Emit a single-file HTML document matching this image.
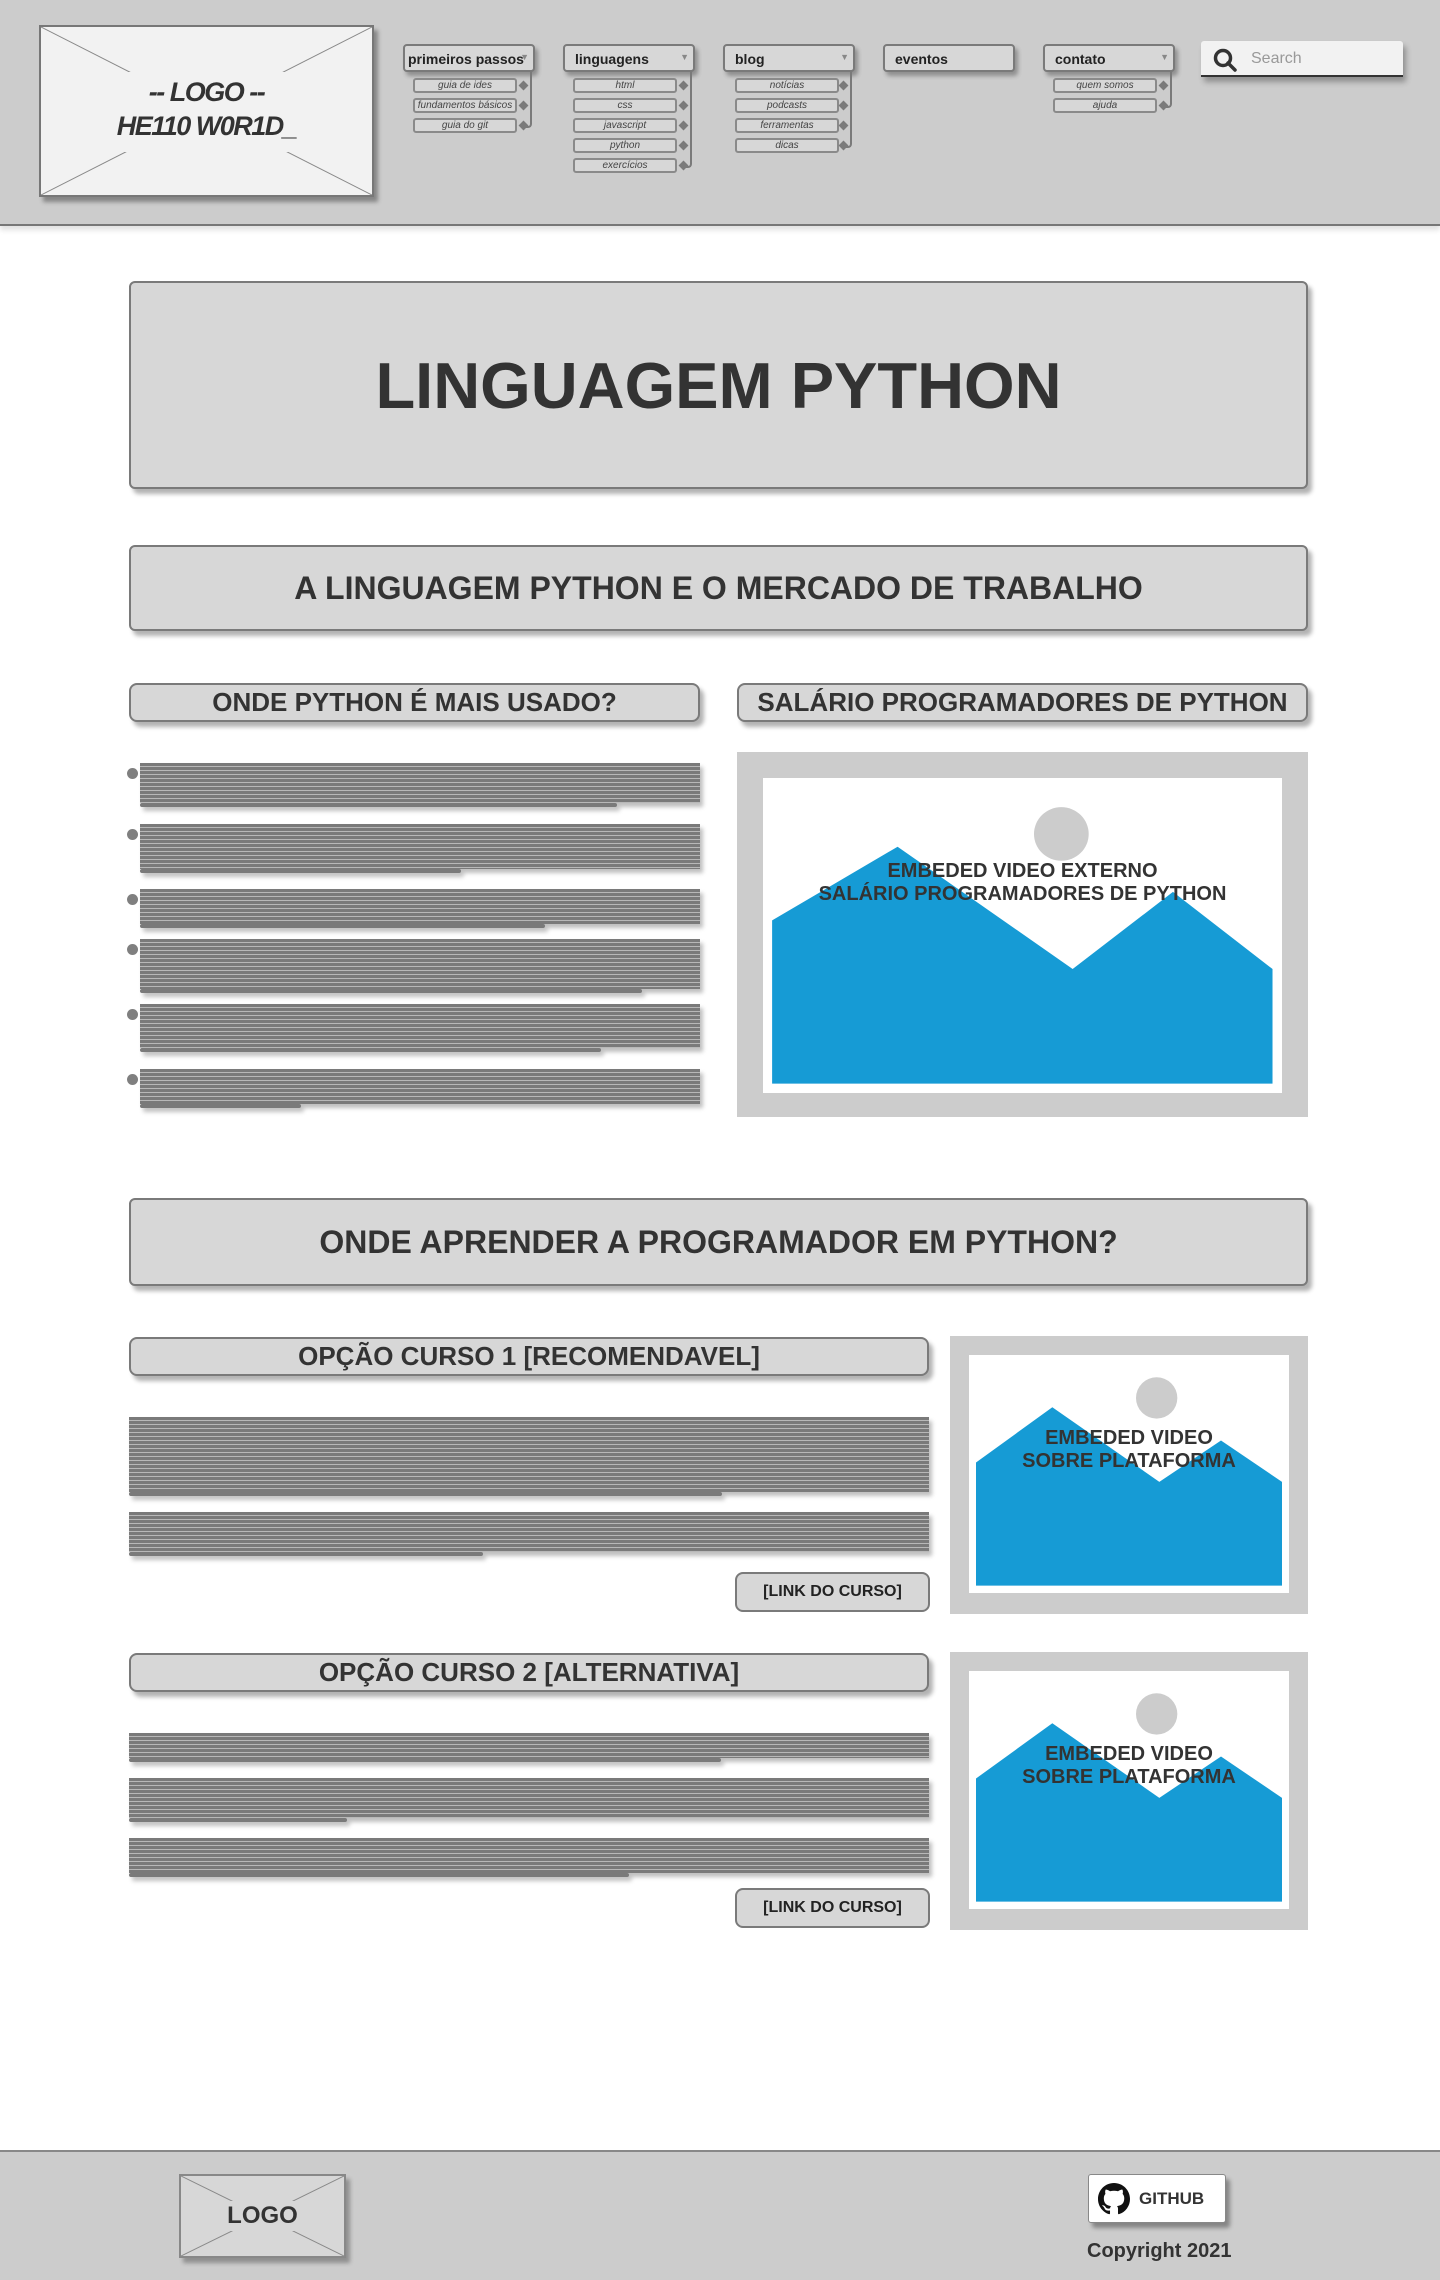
<!DOCTYPE html>
<html><head><meta charset="utf-8">
<style>
*{margin:0;padding:0;box-sizing:border-box}
body{width:1440px;height:2280px;position:relative;background:#fff;font-family:"Liberation Sans",Arial,sans-serif;color:#333;overflow:hidden}
.a{position:absolute}
.box{position:absolute;background:#d7d7d7;border:2px solid #7a7a7a;border-radius:6px;box-shadow:4px 5px 4px rgba(0,0,0,.3);display:flex;align-items:center;justify-content:center;font-weight:bold;color:#333;white-space:nowrap}
.nav{position:absolute;top:44px;height:28px;width:132px;background:#d7d7d7;border:2px solid #7a7a7a;border-radius:4px;box-shadow:3px 4px 4px rgba(0,0,0,.3);font-size:14px;font-weight:bold;padding:5px 0 0 3px;color:#222;white-space:nowrap}
.nav .ar{position:absolute;right:4px;top:6px;font-size:9px;color:#888}
.sub{position:absolute;height:15px;width:104px;background:#d7d7d7;border:2px solid #8a8a8a;border-radius:3px;font-size:10px;font-style:italic;text-align:center;line-height:12px;color:#444;white-space:nowrap;overflow:hidden}
.conn{position:absolute;border-right:2px solid #7a7a7a;border-bottom:2px solid #7a7a7a;border-radius:0 0 4px 0;width:6px}
.dm{position:absolute;width:7px;height:7px;background:#7a7a7a;transform:rotate(45deg)}
.lines{position:absolute;background:repeating-linear-gradient(to bottom,#7a7a7a 0,#7a7a7a 3px,#b8b8b8 3px,#b8b8b8 4px);box-shadow:3px 4px 4px rgba(0,0,0,.25)}
.last{position:absolute;height:4px;background:#7a7a7a;border-radius:2px;box-shadow:3px 4px 4px rgba(0,0,0,.25)}
.dot{position:absolute;width:11px;height:11px;border-radius:50%;background:#7f7f7f}
.vid{position:absolute;background:#ccc}
.vid .w{position:absolute;background:#fff}
.vid svg{position:absolute;left:0;top:0;width:100%;height:100%}
.vt{position:absolute;left:0;right:0;text-align:center;font-weight:bold;color:#333;white-space:nowrap}
.btn{position:absolute;background:#d7d7d7;border:2px solid #7a7a7a;border-radius:8px;font-size:16px;font-weight:bold;display:flex;align-items:center;justify-content:center;color:#222}
</style></head><body>

<!-- header -->
<div class="a" style="left:0;top:0;width:1440px;height:226px;background:#ccc;border-bottom:2px solid #777;box-shadow:0 4px 5px rgba(0,0,0,.12)"></div>
<div class="a" style="left:39px;top:25px;width:335px;height:172px;background:#f2f2f2;border:2px solid #777;box-shadow:4px 5px 4px rgba(0,0,0,.35)">
<svg width="331" height="168" style="position:absolute;left:0;top:0"><line x1="0" y1="0" x2="331" y2="168" stroke="#888" stroke-width="1"/><line x1="331" y1="0" x2="0" y2="168" stroke="#888" stroke-width="1"/></svg>
<div style="position:absolute;left:80px;top:45px;width:171px;height:80px;background:#f2f2f2"></div>
<div style="position:absolute;left:0;right:0;top:48px;text-align:center;font-style:italic;font-weight:bold;font-size:27px;line-height:34px;color:#333;letter-spacing:-1.5px">-- LOGO --<br>HE110 W0R1D_</div>
</div>

<div class="nav" style="left:403px">primeiros passos<span class="ar">▼</span></div>
<div class="nav" style="left:563px;padding-left:10px">linguagens<span class="ar">▼</span></div>
<div class="nav" style="left:723px;padding-left:10px">blog<span class="ar">▼</span></div>
<div class="nav" style="left:883px;padding-left:10px">eventos</div>
<div class="nav" style="left:1043px;padding-left:10px">contato<span class="ar">▼</span></div>

<div class="sub" style="left:413px;top:78px">guia de ides</div>
<div class="sub" style="left:413px;top:98px">fundamentos básicos</div>
<div class="sub" style="left:413px;top:118px">guia do git</div>
<div class="conn" style="left:526px;top:72px;height:56px"></div>
<div class="dm" style="left:520px;top:82px"></div><div class="dm" style="left:520px;top:102px"></div><div class="dm" style="left:520px;top:122px"></div>

<div class="sub" style="left:573px;top:78px">html</div>
<div class="sub" style="left:573px;top:98px">css</div>
<div class="sub" style="left:573px;top:118px">javascript</div>
<div class="sub" style="left:573px;top:138px">python</div>
<div class="sub" style="left:573px;top:158px">exercícios</div>
<div class="conn" style="left:686px;top:72px;height:96px"></div>
<div class="dm" style="left:680px;top:82px"></div><div class="dm" style="left:680px;top:102px"></div><div class="dm" style="left:680px;top:122px"></div><div class="dm" style="left:680px;top:142px"></div><div class="dm" style="left:680px;top:162px"></div>

<div class="sub" style="left:735px;top:78px">notícias</div>
<div class="sub" style="left:735px;top:98px">podcasts</div>
<div class="sub" style="left:735px;top:118px">ferramentas</div>
<div class="sub" style="left:735px;top:138px">dicas</div>
<div class="conn" style="left:846px;top:72px;height:76px"></div>
<div class="dm" style="left:840px;top:82px"></div><div class="dm" style="left:840px;top:102px"></div><div class="dm" style="left:840px;top:122px"></div><div class="dm" style="left:840px;top:142px"></div>

<div class="sub" style="left:1053px;top:78px">quem somos</div>
<div class="sub" style="left:1053px;top:98px">ajuda</div>
<div class="conn" style="left:1166px;top:72px;height:36px"></div>
<div class="dm" style="left:1160px;top:82px"></div><div class="dm" style="left:1160px;top:102px"></div>

<div class="a" style="left:1201px;top:41px;width:202px;height:36px;background:#f2f2f2;border-bottom:2px solid #333;border-radius:3px 3px 0 0;box-shadow:3px 5px 6px rgba(0,0,0,.3)">
<svg width="30" height="30" style="position:absolute;left:10px;top:5px"><circle cx="12" cy="12" r="7.5" fill="none" stroke="#333" stroke-width="3.5"/><line x1="17" y1="17" x2="24" y2="24" stroke="#333" stroke-width="3.5" stroke-linecap="round"/></svg>
<div style="position:absolute;left:50px;top:9px;font-size:16px;color:#999">Search</div>
</div>

<!-- main -->
<div class="box" style="left:129px;top:281px;width:1179px;height:208px;font-size:65px">LINGUAGEM PYTHON</div>
<div class="box" style="left:129px;top:545px;width:1179px;height:86px;font-size:32px">A LINGUAGEM PYTHON E O MERCADO DE TRABALHO</div>

<div class="box" style="left:129px;top:683px;width:571px;height:39px;font-size:26px;border-radius:8px">ONDE PYTHON É MAIS USADO?</div>
<div class="box" style="left:737px;top:683px;width:571px;height:39px;font-size:26px;border-radius:8px">SALÁRIO PROGRAMADORES DE PYTHON</div>

<!-- bullets -->
<div class="dot" style="left:127px;top:768px"></div><div class="lines" style="left:140px;top:763px;width:560px;height:40px"></div><div class="last" style="left:140px;top:803px;width:477px"></div>
<div class="dot" style="left:127px;top:829px"></div><div class="lines" style="left:140px;top:824px;width:560px;height:45px"></div><div class="last" style="left:140px;top:869px;width:321px"></div>
<div class="dot" style="left:127px;top:894px"></div><div class="lines" style="left:140px;top:889px;width:560px;height:35px"></div><div class="last" style="left:140px;top:924px;width:405px"></div>
<div class="dot" style="left:127px;top:944px"></div><div class="lines" style="left:140px;top:939px;width:560px;height:50px"></div><div class="last" style="left:140px;top:989px;width:502px"></div>
<div class="dot" style="left:127px;top:1009px"></div><div class="lines" style="left:140px;top:1004px;width:560px;height:44px"></div><div class="last" style="left:140px;top:1048px;width:461px"></div>
<div class="dot" style="left:127px;top:1074px"></div><div class="lines" style="left:140px;top:1069px;width:560px;height:35px"></div><div class="last" style="left:140px;top:1104px;width:161px"></div>

<!-- video 1 -->
<div class="vid" style="left:737px;top:752px;width:571px;height:365px">
<div class="w" style="left:26px;top:26px;width:519px;height:315px">
<svg viewBox="0 0 1423 940" preserveAspectRatio="none"><ellipse cx="818" cy="167" rx="75" ry="80" fill="#ccc"/><polygon points="25,425 369,205 849,570 1124,340 1397,570 1397,912 25,912" fill="#169bd5"/></svg>
<div class="vt" style="top:82px;font-size:20px;line-height:23px">EMBEDED VIDEO EXTERNO<br>SALÁRIO PROGRAMADORES DE PYTHON</div>
</div></div>

<div class="box" style="left:129px;top:1198px;width:1179px;height:88px;font-size:32px">ONDE APRENDER A PROGRAMADOR EM PYTHON?</div>

<!-- option 1 -->
<div class="box" style="left:129px;top:1337px;width:800px;height:39px;font-size:26px;border-radius:8px">OPÇÃO CURSO 1 [RECOMENDAVEL]</div>
<div class="lines" style="left:129px;top:1417px;width:800px;height:75px"></div><div class="last" style="left:129px;top:1492px;width:593px"></div>
<div class="lines" style="left:129px;top:1512px;width:800px;height:40px"></div><div class="last" style="left:129px;top:1552px;width:354px"></div>
<div class="btn" style="left:735px;top:1572px;width:195px;height:40px">[LINK DO CURSO]</div>

<div class="vid" style="left:950px;top:1336px;width:358px;height:278px">
<div class="w" style="left:19px;top:19px;width:320px;height:238px">
<svg viewBox="0 0 960 715" preserveAspectRatio="none"><circle cx="563" cy="129" r="62" fill="#ccc"/><polygon points="21,323 250,157 571,381 756,257 939,381 939,693 21,693" fill="#169bd5"/></svg>
<div class="vt" style="top:72px;font-size:20px;line-height:23px">EMBEDED VIDEO<br>SOBRE PLATAFORMA</div>
</div></div>

<!-- option 2 -->
<div class="box" style="left:129px;top:1653px;width:800px;height:39px;font-size:26px;border-radius:8px">OPÇÃO CURSO 2 [ALTERNATIVA]</div>
<div class="lines" style="left:129px;top:1733px;width:800px;height:25px"></div><div class="last" style="left:129px;top:1758px;width:592px"></div>
<div class="lines" style="left:129px;top:1778px;width:800px;height:40px"></div><div class="last" style="left:129px;top:1818px;width:218px"></div>
<div class="lines" style="left:129px;top:1838px;width:800px;height:35px"></div><div class="last" style="left:129px;top:1873px;width:500px"></div>
<div class="btn" style="left:735px;top:1888px;width:195px;height:40px">[LINK DO CURSO]</div>

<div class="vid" style="left:950px;top:1652px;width:358px;height:278px">
<div class="w" style="left:19px;top:19px;width:320px;height:238px">
<svg viewBox="0 0 960 715" preserveAspectRatio="none"><circle cx="563" cy="129" r="62" fill="#ccc"/><polygon points="21,323 250,157 571,381 756,257 939,381 939,693 21,693" fill="#169bd5"/></svg>
<div class="vt" style="top:72px;font-size:20px;line-height:23px">EMBEDED VIDEO<br>SOBRE PLATAFORMA</div>
</div></div>

<!-- footer -->
<div class="a" style="left:0;top:2150px;width:1440px;height:130px;background:#ccc;border-top:2px solid #888"></div>
<div class="a" style="left:179px;top:2174px;width:167px;height:84px;background:#d7d7d7;border:2px solid #888;box-shadow:4px 5px 4px rgba(0,0,0,.3)">
<svg width="163" height="80" style="position:absolute;left:0;top:0"><line x1="0" y1="0" x2="163" y2="80" stroke="#888"/><line x1="163" y1="0" x2="0" y2="80" stroke="#888"/></svg>
<div style="position:absolute;left:44px;top:25px;width:75px;height:30px;background:#d7d7d7"></div>
<div style="position:absolute;left:0;right:0;top:26px;text-align:center;font-size:24px;font-weight:bold;color:#333">LOGO</div>
</div>
<div class="a" style="left:1088px;top:2174px;width:138px;height:49px;background:#fff;border:1px solid #888;border-radius:3px;box-shadow:4px 5px 4px rgba(0,0,0,.35)">
<svg width="32" height="32" viewBox="0 0 16 16" style="position:absolute;left:9px;top:8px"><path fill="#111" d="M8 0C3.58 0 0 3.58 0 8c0 3.540 2.29 6.53 5.47 7.59.4.07.55-.17.55-.38 0-.19-.01-.82-.01-1.49-2.01.37-2.530-.49-2.69-.94-.09-.23-.48-.94-.82-1.13-.28-.15-.68-.52-.01-.53.63-.01 1.080.58 1.23.82.72 1.21 1.87.87 2.33.66.07-.52.28-.87.51-1.07-1.78-.2-3.64-.89-3.64-3.95 0-.87.31-1.59.82-2.15-.08-.2-.36-1.02.08-2.12 0 0 .67-.21 2.2.82.64-.18 1.32-.27 2-.27.68 0 1.36.09 2 .27 1.53-1.04 2.2-.82 2.2-.82.44 1.1.16 1.92.08 2.12.51.56.82 1.27.82 2.15 0 3.07-1.87 3.75-3.65 3.95.29.25.54.73.54 1.48 0 1.07-.01 1.93-.01 2.2 0 .21.15.46.55.38A8.013 8.013 0 0016 8c0-4.42-3.58-8-8-8z"/></svg>
<div style="position:absolute;left:50px;top:14px;font-size:17px;font-weight:bold;color:#333">GITHUB</div>
</div>
<div class="a" style="left:1087px;top:2240px;font-size:20px;font-weight:bold;color:#333">Copyright 2021</div>
</body></html>
